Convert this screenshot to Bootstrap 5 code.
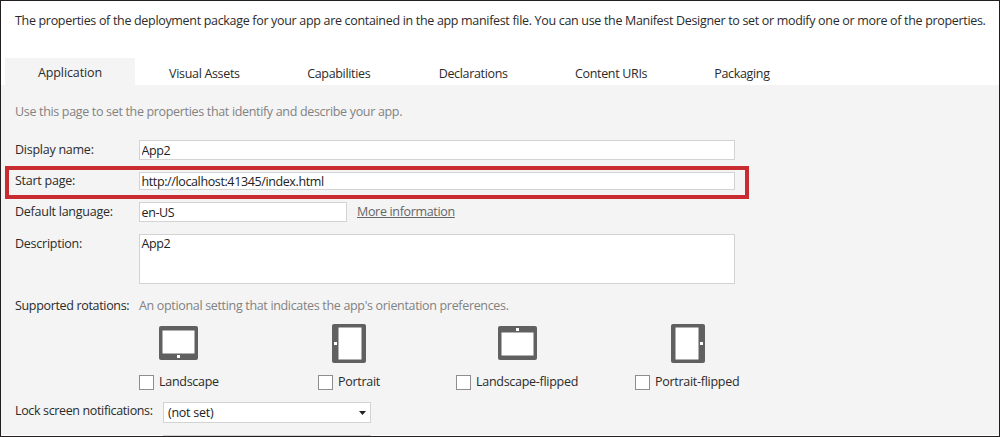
<!DOCTYPE html>
<html lang="en">
<head>
<meta charset="utf-8">
<meta name="viewport" content="width=device-width, initial-scale=1">
<title>Manifest Designer</title>
<link rel="stylesheet" href="https://cdn.jsdelivr.net/npm/bootstrap@5.3.0/dist/css/bootstrap.min.css">
<style>
body{font-family:"Open Sans","Noto Sans",sans-serif;font-size:12.5px;line-height:18px;letter-spacing:-.33px;color:#2b2b2b;background:#fff;font-variant-ligatures:none}
.designer{width:1000px;height:437px;border:1px solid #231f20}
.intro{height:57px;padding:11px 0 0 14px;letter-spacing:-.32px}
.tabs{height:27px;padding-left:4px;gap:4.4px}
.tabs .nav-link{width:130px;height:27px;padding:6.5px 0 0;color:#2b2b2b;border-radius:0;text-align:center}
.tabs .nav-link.active{background:#f4f4f4;letter-spacing:-.1px;padding-top:6px}
.tabs .uris{padding-left:7px}
.panel{background:#f4f4f4;height:350px;padding:18px 0 0 14px}
.hint{color:#828282}
.field-row{display:grid;grid-template-columns:124px 1fr;align-items:start}
.field-row>label{padding-top:1px;letter-spacing:-.25px}
.form-control,.form-select{font-size:12.5px;line-height:18px;letter-spacing:-.38px;border:1px solid #d3d3d3;border-radius:0;padding:0 2px 0 1.5px;color:#222;height:20px;min-height:0;background-color:#fff}
.w-long{width:596px}
.w-short{width:208px}
.callout{width:744px;height:33px;margin:6px 0 0 -10px;padding:2px 0 0 6px;border:4px solid #c92c30}
.callout .form-control{height:18px;line-height:16px}
.callout label{padding-top:0}
textarea.form-control{height:50px;min-height:50px;resize:none;overflow:hidden}
.more{color:#666;margin-left:10px;padding-top:1px}
.rotations{display:grid;grid-template-columns:179px 138px 179px 140px;margin-left:124px}
.choices{letter-spacing:-.28px}
.rotations .pic{height:39px;display:flex;align-items:start}
.pic .wide{margin-top:2px}
.form-check-input.box{width:15px;height:15px;border:1px solid #8e8e8e;border-radius:0;margin:0 5px 0 0;background:#fff}
.form-select{background-image:none;height:21px;padding:1px 4px;width:208px;letter-spacing:-.25px}
.lock-label{width:148px;letter-spacing:-.36px}
.next-field{width:208px;height:1px;background:#d3d3d3;margin:12px 0 0 148px}
</style>
</head>
<body>
<main class="designer overflow-hidden">
  <p class="intro mb-0 text-nowrap">The properties of the deployment package for your app are contained in the app manifest file. You can use the Manifest Designer to set or modify one or more of the properties.</p>
  <nav class="nav tabs flex-nowrap">
    <a class="nav-link active" href="#">Application</a>
    <a class="nav-link" href="#">Visual Assets</a>
    <a class="nav-link" href="#">Capabilities</a>
    <a class="nav-link" href="#">Declarations</a>
    <a class="nav-link uris" href="#">Content URIs</a>
    <a class="nav-link" href="#">Packaging</a>
  </nav>
  <section class="panel">
    <p class="hint mb-0">Use this page to set the properties that identify and describe your app.</p>
    <div class="field-row" style="margin-top:19px">
      <label for="name">Display name:</label>
      <input id="name" class="form-control w-long" value="App2">
    </div>
    <div class="callout field-row">
      <label for="start">Start page:</label>
      <input id="start" class="form-control w-long" value="http://localhost:41345/index.html">
    </div>
    <div class="field-row" style="margin-top:3px">
      <label for="lang">Default language:</label>
      <div class="d-flex"><input id="lang" class="form-control w-short" value="en-US"><a class="more" href="#">More information</a></div>
    </div>
    <div class="field-row" style="margin-top:12px">
      <label for="desc">Description:</label>
      <textarea id="desc" class="form-control w-long">App2</textarea>
    </div>
    <div class="field-row" style="margin-top:13px">
      <span>Supported rotations:</span>
      <span class="hint">An optional setting that indicates the app's orientation preferences.</span>
    </div>
    <div class="rotations" style="margin-top:9px">
      <div class="pic" style="padding-left:20px"><svg class="wide" width="39" height="34" viewBox="0 0 39 34"><rect width="39" height="34" rx="2" fill="#606060"/><rect x="3.5" y="4.5" width="32" height="23" fill="#fff"/><rect x="18" y="29" width="3" height="3" fill="#fff"/></svg></div>
      <div class="pic" style="padding-left:14px"><svg width="34" height="39" viewBox="0 0 34 39"><rect width="34" height="39" rx="2" fill="#606060"/><rect x="6.5" y="3.5" width="23" height="32" fill="#fff"/><rect x="2" y="18" width="3" height="3" fill="#fff"/></svg></div>
      <div class="pic" style="padding-left:42px"><svg class="wide" width="39" height="34" viewBox="0 0 39 34"><rect width="39" height="34" rx="2" fill="#606060"/><rect x="3.5" y="6.5" width="32" height="23" fill="#fff"/><rect x="18" y="2" width="3" height="3" fill="#fff"/></svg></div>
      <div class="pic" style="padding-left:36px"><svg width="34" height="39" viewBox="0 0 34 39"><rect width="34" height="39" rx="2" fill="#606060"/><rect x="4.5" y="3.5" width="23" height="32" fill="#fff"/><rect x="29" y="18" width="3" height="3" fill="#fff"/></svg></div>
    </div>
    <div class="rotations choices" style="margin-top:10px">
      <label class="d-flex align-items-center"><input type="checkbox" class="form-check-input box">Landscape</label>
      <label class="d-flex align-items-center"><input type="checkbox" class="form-check-input box">Portrait</label>
      <label class="d-flex align-items-center"><input type="checkbox" class="form-check-input box">Landscape-flipped</label>
      <label class="d-flex align-items-center"><input type="checkbox" class="form-check-input box">Portrait-flipped</label>
    </div>
    <div class="d-flex" style="margin-top:11px">
      <span class="lock-label">Lock screen notifications:</span>
      <div class="form-select d-flex justify-content-between"><span>(not set)</span><svg width="7" height="16" viewBox="0 0 7 16"><path d="M0 7h7l-3.5 4z" fill="#222"/></svg></div>
    </div>
    <div class="next-field"></div>
  </section>
</main>
<script src="https://cdn.jsdelivr.net/npm/bootstrap@5.3.0/dist/js/bootstrap.bundle.min.js"></script>
</body>
</html>
